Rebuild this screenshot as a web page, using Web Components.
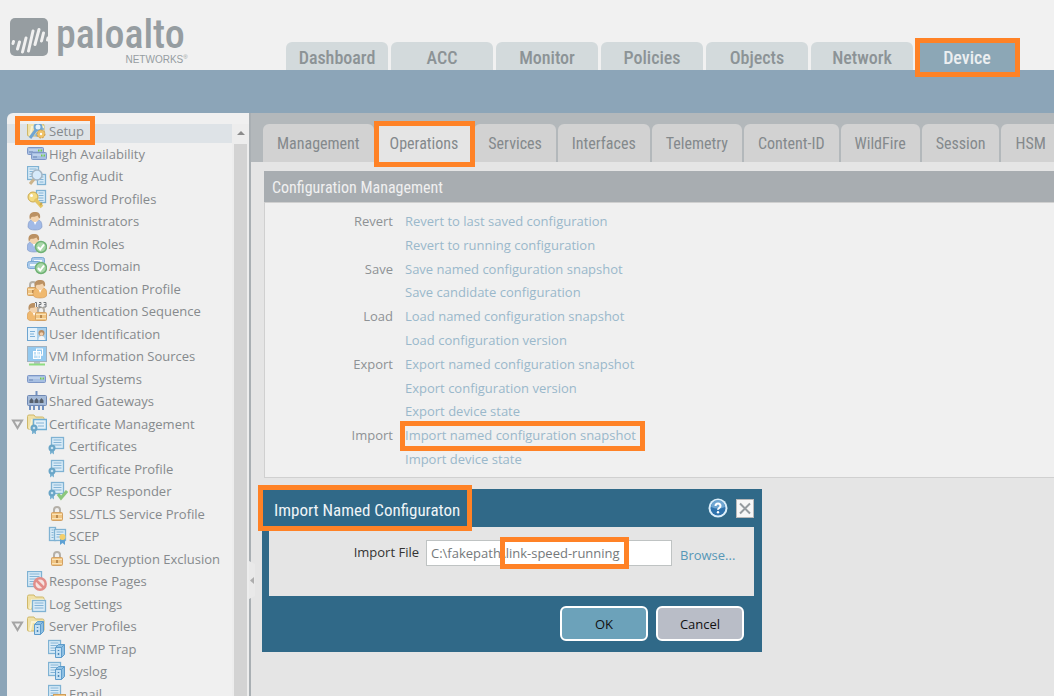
<!DOCTYPE html>
<html lang="en">
<head>
<meta charset="utf-8">
<title>Device - Setup - Operations</title>
<style>
  body { margin: 0; font: 13px/20px "Open Sans", "Noto Sans", sans-serif; color: #85898c; background: #8ca5b8; }
</style>
</head>
<body>
<pa-app></pa-app>
<script>
const ORANGE = '#ff8226';
const NARROW = '"Roboto Condensed", Roboto, sans-serif';

function define(name, html, setup) {
  const template = document.createElement('template');
  template.innerHTML = html;
  customElements.define(name, class extends HTMLElement {
    connectedCallback() {
      if (this.shadowRoot) return;
      this.attachShadow({ mode: 'open' }).append(template.content.cloneNode(true));
      if (setup) setup(this, this.shadowRoot);
    }
  });
}

/* ---------- icon parts ---------- */
const doc = (x, y, w, h) => {
  let s = `<rect x="${x + .5}" y="${y + .5}" width="${w - 1}" height="${h - 1}" fill="#d9ebf7" stroke="#7fb2d3" stroke-width="1.300"/>`;
  for (let i = y + 3; i < y + h - 2; i += 2.5) s += `<path d="M${x + 2.5} ${i}h${w - 5}" stroke="#84b4d6"/>`;
  return s;
};
const person = (x, y, shirt) => `<g transform="translate(${x} ${y})"><path d="M0 15q0-7 4-7h6q4 0 4 7-1 3-7 3T0 15z" fill="${shirt}" stroke="#7b93c4" stroke-width=".6"/><path d="M5.500 9l1.500 4 2-4z" fill="#fff"/><circle cx="7" cy="5.800" r="4.300" fill="#f3d3ad"/><path d="M2 8C0 1.500 4 0 7 0s6 1 5 6.500C10.500 6 10 4.500 9.500 3.500 7.500 5 5 4.500 3.500 5z" fill="#bb9163"/></g>`;
const lock = (x, y) => `<g transform="translate(${x} ${y})"><path d="M3 7V4q0-3 3-3t3 3v3" fill="none" stroke="#b5b0a8" stroke-width="2"/><rect x=".5" y="6.500" width="11" height="8" rx="1" fill="#f1c582" stroke="#d2a164"/><path d="M1 8.500h10M1 12.500h10" stroke="#f9e2b8"/><rect x="5" y="9" width="2" height="3" fill="#b98a50"/></g>`;
const check = (cx, cy) => `<circle cx="${cx}" cy="${cy}" r="5.500" fill="#a9d7a9" stroke="#6fb274" stroke-width="1.500"/><path d="M${cx - 3} ${cy}l2.200 2.500 3.800-5" fill="none" stroke="#fff" stroke-width="2"/>`;
const ribbon = (cx, cy) => `<path d="M${cx - 2} ${cy + 2}v4.500l2-1.500 2 1.500V${cy + 2}" fill="#7eb4d3"/><circle cx="${cx}" cy="${cy}" r="3.500" fill="#69a5c7"/><circle cx="${cx}" cy="${cy}" r="1.300" fill="#c6e0ee"/>`;
const folder = '<path d="M.5 14V2.500q0-1.500 1.500-1.500h5l1.500 2h7q1.500 0 1.500 1.500V14q0 1-1 1H1.500q-1 0-1-1z" fill="#f0e1a8" stroke="#cfb869"/><path d="M3 15L5 6h12" fill="none" stroke="#faf2d0" stroke-width="2"/>';
const box = (x, y, w) => `<rect x="${x + .5}" y="${y + .5}" width="${w - 1}" height="7" rx="1" fill="#a7bfe2" stroke="#7e97c6"/><path d="M${x + 2} ${y + 3}h${w - 4}" stroke="#d3e1f4"/><path d="M${x + 2} ${y + 5}h4" stroke="#6d86b3"/><path d="M${x + w - 6} ${y + 3.500}h1.500m1 0h1.500" stroke="#72c94e" stroke-width="2"/>`;
const plainBox = (x, y, w) => `<rect x="${x + .5}" y="${y + .5}" width="${w - 1}" height="7" rx="2" fill="#a9c9ea" stroke="#7aa8d4"/><path d="M${x + 3} ${y + 4}h${w - 6}" stroke="#f2f8fd" stroke-width="2"/>`;
const server = (x, y) => `<g transform="translate(${x} ${y})"><path d="M.5 3.500l3-3h6v10l-3 3h-6z" fill="#8dbfe2" stroke="#5e9ccb"/><path d="M.5 3.500h6v10M6.500 3.500l3-3" fill="none" stroke="#5e9ccb"/><rect x="1" y="4" width="5" height="9" fill="#c4e0f3"/><path d="M3.500 6v1m0 2v2" stroke="#4e88b6" stroke-width="1.500"/></g>`;
const cert = doc(3, 1, 13, 12) + ribbon(4, 12);

const ICONS = {
  setup: folder + '<path d="M9 15l7-8" stroke="#7fb2dc" stroke-width="3"/><circle cx="11" cy="6" r="3.500" fill="#e4f1fa" stroke="#6fa5d3" stroke-width="2"/><path d="M3 17l6-8" stroke="#6fa5d3" stroke-width="3"/><circle cx="14" cy="13" r="4" fill="#efc268" stroke="#cf9b4b" stroke-dasharray="2 1"/><circle cx="14" cy="13" r="1.200" fill="#fff"/>',
  ha: box(0, 3, 17) + box(4, 8, 16),
  audit: doc(0, 0, 12, 14) + doc(10, 8, 9, 11) + '<path d="M3 18l5-6" stroke="#cdb48a" stroke-width="3"/><circle cx="10" cy="9" r="5" fill="#d6eafa" stroke="#a5b6c4" stroke-width="1.500"/>',
  password: doc(9, 1, 10, 13) + '<circle cx="6" cy="8" r="5" fill="#f3dc85" stroke="#cba94e"/><path d="M8 10l7 8" stroke="#e5c562" stroke-width="3.500"/><path d="M15 14l-2 2" stroke="#cba94e" stroke-width="2"/><circle cx="4.500" cy="6.500" r="1.500" fill="#fff"/>',
  user: person(1, 1, '#a2bae6'),
  role: person(0, 0, '#a2bae6') + check(14, 13),
  domain: plainBox(4, 1, 14) + plainBox(0, 5, 14) + check(14, 12),
  auth: lock(0, 2) + person(6, 1, '#f0b96f').replace(/#7b93c4/, '#d2934f'),
  sequence: person(0, 2, '#f0b96f').replace(/#7b93c4/, '#d2934f') + lock(8, 5) + '<path d="M8 0h12v6H8z" fill="#f0f0f0"/><path d="M8 1.500h1.500V6M12 1.500h2v2h-2V6h2.500M16.500 1.500H19V6h-2.500m.5-2.300h2" fill="none" stroke="#73777a"/>',
  userid: '<rect x=".5" y="3.500" width="19" height="13" fill="#e4f1fa" stroke="#6da4d0"/><path d="M3 7.500h5m-5 2.500h4m-4 2.500h5" stroke="#7bb0da"/><rect x="10" y="4" width="9" height="12" fill="#a9cfeb"/><path d="M11.500 16q0-4 3-4t3.500 4z" fill="#f3f5f7"/><circle cx="14.500" cy="9" r="3" fill="#b58b63"/><circle cx="14.500" cy="10" r="1.800" fill="#f0cfae"/>',
  vm: '<rect x=".5" y=".5" width="19" height="15" fill="#94c9ef" stroke="#a3b2bf"/><rect x="6.500" y="5.500" width="7" height="7" fill="#bfe0f6" stroke="#fff"/><rect x="9.500" y="3" width="6" height="6" fill="none" stroke="#fff"/><path d="M7 9h9M11 5v8" stroke="#eef8ff"/><path d="M7 16h6v2H7z" fill="#b6bfc5"/><path d="M2 18.500h16" stroke="#8edc82" stroke-width="2"/>',
  vsys: box(0, 6, 19),
  gateway: '<path d="M9.500 0v6M3 14v5m4-5v5m5-5v5m4-5v5" stroke="#7191c0" stroke-width="2"/><rect x=".5" y="4.500" width="19" height="10" rx="1" fill="#a5bbd9" stroke="#7089b4"/><path d="M2.500 12V9.500L4.500 7l2 2.500V12zM7.500 12V9.500L9.500 7l2 2.500V12zM12.500 12V9.500l2-2.500 2 2.500V12z" fill="#56606d"/>',
  certs: folder + '<g transform="translate(4 5)"><rect x="2.500" y=".5" width="13" height="10" fill="#e3f0f8" stroke="#6faed4" stroke-width="1.500"/><path d="M5 4h8m-6 3h6" stroke="#84b4d6"/>' + ribbon(3, 9) + '</g>',
  cert: cert,
  ocsp: cert + '<path d="M10 13l3 4 6-7" fill="none" stroke="#8bc77d" stroke-width="3"/>',
  lock: lock(3, 2),
  scep: doc(1, 1, 7, 14) + doc(6, 3, 12, 12) + '<path d="M12 12h5v7l-2.500-2-2.500 2z" fill="#5fa2d4"/><circle cx="14.500" cy="11" r="3" fill="#f3cf6b"/>',
  block: doc(0, 0, 15, 16) + '<circle cx="13" cy="13" r="5.700" fill="#f6e2e0" stroke="#e28d89" stroke-width="2.500"/><path d="M9 9l8 8" stroke="#e28d89" stroke-width="2.500"/>',
  logs: folder + doc(5, 6, 14, 12),
  servers: folder + server(7, 5),
  trap: doc(0, 1, 13, 14) + server(7, 5),
  email: doc(0, 1, 13, 14) + '<rect x="5.500" y="10.500" width="12" height="8" fill="#f2c98a" stroke="#cf9f5a"/>'
};

/* ---------- shared pieces ---------- */
define('pa-icon', `<style>:host{display:block;width:20px;height:20px}svg{display:block}</style>
<svg width="20" height="20" viewBox="0 0 20 20" aria-hidden="true"></svg>`,
  (el, root) => { root.querySelector('svg').innerHTML = ICONS[el.getAttribute('name')] || ''; });

define('pa-mark', `<style>:host{position:absolute;box-sizing:border-box;border:5px solid ${ORANGE};pointer-events:none;z-index:3}</style>`);

/* ---------- header ---------- */
define('pa-logo', `<style>
:host{display:flex;gap:8px;color:#969da1}
svg{display:block;margin-top:1px}
.name{font:500 40px/40px ${NARROW};margin:-2px 0 0 -1px}
.sub{font:10px/10px "Liberation Sans",sans-serif;text-align:right;margin-right:-3px}
sup{font-size:6px;line-height:0}
</style>
<svg width="39" height="38" viewBox="0 0 39 38" aria-hidden="true"><rect width="38" height="38" rx="5" fill="#969da1"/><g stroke="#f1f1f1" stroke-width="3" stroke-linecap="round"><path d="M3.500 23.500l-.5 2M9.500 24l-2 7M16 20l-3.500 14M23 13l-4.500 20M29 11.500l-4 15M33.500 15l-2 8M38 20l-.5 2"/></g></svg>
<div><div class="name">paloalto</div><div class="sub">NETWORKS<sup>®</sup></div></div>`);

define('pa-main-tabs', `<style>
:host{display:flex;gap:3px;align-items:flex-end}
a{box-sizing:border-box;width:102px;height:28px;border-radius:6px 6px 0 0;background:#d3dadc;color:#8c9396;font:500 18px/32px ${NARROW};text-align:center;text-decoration:none;position:relative}
a[aria-current]{background:#8ca7b6;color:#eceff1}
pa-mark{inset:-4px -2px -7px -1px}
</style>
<a href="#dashboard">Dashboard</a><a href="#acc">ACC</a><a href="#monitor">Monitor</a><a href="#policies">Policies</a><a href="#objects">Objects</a><a href="#network">Network</a><a href="#device" aria-current="page">Device<pa-mark></pa-mark></a>`);

define('pa-header', `<style>
:host{display:flex;box-sizing:border-box;height:70px;background:#f1f1f1;padding-left:10px}
pa-logo{width:276px;padding-top:17px;box-sizing:border-box}
</style><pa-logo></pa-logo><pa-main-tabs></pa-main-tabs>`);

/* ---------- navigation tree ---------- */
define('pa-tree-item', `<style>
:host{display:flex;align-items:center;padding-left:20px;color:#868a8d}
:host([level="2"]){padding-left:41px}
:host([selected]){background:#dee3e7}
:host([open]){padding-left:4px}
.twist{display:none}
:host([open]) .twist{display:block;width:16px}
a{color:inherit;text-decoration:none;white-space:nowrap;margin-left:2px;line-height:20px}
:host([level="2"]) a{margin-left:1px}
</style>
<svg class="twist" width="16" height="12" viewBox="0 0 16 12" aria-hidden="true"><path d="M2 2.500h9L6.500 10z" fill="#f0f0f0" stroke="#a5a5a5" stroke-width="2"/></svg>
<pa-icon></pa-icon><a href="#item"><slot></slot></a>`,
  (el, root) => {
    const icon = document.createElement('pa-icon');
    icon.setAttribute('name', el.getAttribute('icon'));
    root.querySelector('pa-icon').replaceWith(icon);
  });

const TREE = [
  ['setup', 'Setup', 'selected'], ['ha', 'High Availability'], ['audit', 'Config Audit'], ['password', 'Password Profiles'],
  ['user', 'Administrators'], ['role', 'Admin Roles'], ['domain', 'Access Domain'], ['auth', 'Authentication Profile'],
  ['sequence', 'Authentication Sequence'], ['userid', 'User Identification'], ['vm', 'VM Information Sources'],
  ['vsys', 'Virtual Systems'], ['gateway', 'Shared Gateways'], ['certs', 'Certificate Management', 'open'],
  ['cert', 'Certificates', 'level="2"'], ['cert', 'Certificate Profile', 'level="2"'], ['ocsp', 'OCSP Responder', 'level="2"'],
  ['lock', 'SSL/TLS Service Profile', 'level="2"'], ['scep', 'SCEP', 'level="2"'], ['lock', 'SSL Decryption Exclusion', 'level="2"'],
  ['block', 'Response Pages'], ['logs', 'Log Settings'], ['servers', 'Server Profiles', 'open'],
  ['trap', 'SNMP Trap', 'level="2"'], ['trap', 'Syslog', 'level="2"'], ['email', 'Email', 'level="2"']
];

define('pa-sidebar', `<style>
:host{display:flex;position:relative;box-sizing:border-box;width:242px;padding-top:11px;background:#f0f0f0;border-radius:6px 0 0 0;min-height:0}
.view{flex:1;min-width:0;overflow:hidden}
nav{display:grid;min-height:585px;margin-top:-4px}
.scroll{width:17px;display:flex;flex-direction:column;background:#ededed}
.scroll svg{display:block;flex:none}
.thumb{flex:1;width:13px;margin-left:2px;background:#d3d3d3}
pa-mark{inset:3px auto auto 8px;width:80px;height:29px}
</style>
<div class="view"><nav aria-label="Device">${TREE.map(([i, t, a]) => `<pa-tree-item icon="${i}" ${a || ''}>${t}</pa-tree-item>`).join('')}</nav></div>
<div class="scroll"><svg width="17" height="20" viewBox="0 0 17 20" aria-hidden="true"><path d="M5 11l4-4 4 4z" fill="#8b8b8b"/></svg><div class="thumb"></div></div>
<pa-mark></pa-mark>`);

define('pa-splitter', `<style>
:host{display:block;position:relative;width:2px;background:#a9afb3;box-sizing:border-box;z-index:1}
svg{position:absolute;left:0;top:448px}
</style><svg width="7" height="38" viewBox="0 0 7 38" aria-hidden="true"><path d="M0 0l6 3v32l-6 3z" fill="#e9e9e9"/><path d="M5 16v7l-4-3.500z" fill="#adadad"/></svg>`);

/* ---------- content ---------- */
define('pa-sub-tabs', `<style>
:host{display:flex;gap:2px;height:49px;box-sizing:border-box;padding:11px 0 0 12px;background:#b3b8bb;overflow:hidden}
a{flex:none;box-sizing:border-box;padding:0 14px;border-radius:6px 6px 0 0;background:#d2d2d2;color:#84898c;font:16px/40px ${NARROW};text-decoration:none}
a[aria-current]{background:#e5e5e5}
</style>
<a href="#management">Management</a><a href="#operations" aria-current="page">Operations</a><a href="#services">Services</a><a href="#interfaces">Interfaces</a><a href="#telemetry">Telemetry</a><a href="#content-id">Content-ID</a><a href="#wildfire">WildFire</a><a href="#session">Session</a><a href="#hsm">HSM</a>`);

const ACTIONS = [
  ['Revert', 'Revert to last saved configuration'], ['', 'Revert to running configuration'],
  ['Save', 'Save named configuration snapshot'], ['', 'Save candidate configuration'],
  ['Load', 'Load named configuration snapshot'], ['', 'Load configuration version'],
  ['Export', 'Export named configuration snapshot'], ['', 'Export configuration version'], ['', 'Export device state'],
  ['Import', 'Import named configuration snapshot', true], ['', 'Import device state']
];

define('pa-config-panel', `<style>
:host{display:block;margin:9px 0 0 13px}
h2{margin:0;height:31px;padding-left:8px;background:#a8adb1;color:#f0f0f0;font:400 16px/34px ${NARROW}}
.rows{display:grid;grid-template-columns:128px 1fr;column-gap:12px;min-height:262px;padding:6px 0;border:1px solid #d0d0d0;border-right:0;background:#f0f0f0;align-items:center}
.rows span{text-align:right;color:#8e9295}
.rows div{justify-self:start;position:relative}
a{color:#9ab8cb;text-decoration:none}
pa-mark{inset:-4px -9px -6px -5px}
</style>
<h2>Configuration Management</h2>
<div class="rows">${ACTIONS.map(([g, t, m]) => `<span>${g}</span><div><a href="#action">${t}</a>${m ? '<pa-mark></pa-mark>' : ''}</div>`).join('')}</div>`);

define('pa-import-dialog', `<style>
:host{display:block;position:absolute;box-sizing:border-box;width:500px;background:#306988;padding:0 8px 11px 7px;color:#333}
header{display:flex;align-items:center;height:38px;padding-left:5px}
h2{margin:0;flex:1;color:#eef4f7;font:400 17px/24px ${NARROW};padding-top:4px}
header button{display:block;border:0;padding:0;background:none}
header svg{display:block}
.close{margin-left:8px}
form{margin:0}
.body{box-sizing:border-box;height:69px;padding:13px 18px 0 0;background:#e5e5e5;display:flex;position:relative}
label{width:150px;text-align:right;line-height:24px;margin-right:7px}
input{box-sizing:border-box;width:246px;height:26px;margin:0;padding:0 4px;border:1px solid #bfc3c3;border-radius:0;background:#fff;color:#75797b;font:13px/24px "Open Sans","Noto Sans",sans-serif}
.body a{color:#5797b7;text-decoration:none;margin-left:8px;line-height:30px}
footer{display:flex;justify-content:flex-end;gap:8px;padding:10px 10px 0 0}
footer button{box-sizing:border-box;width:88px;height:35px;border:2px solid #fff;border-radius:6px;padding:0;font:13px/20px "Open Sans","Noto Sans",sans-serif;color:#111;background:#b9bdc7}
footer .ok{background:#6ca2ba}
.title{inset:-4px auto auto -4px;width:214px;height:46px}
.file{inset:10px auto auto 231px;width:129px;height:32px}
</style>
<header><h2>Import Named Configuraton</h2>
<button type="button" aria-label="Help"><svg width="20" height="20" viewBox="0 0 20 20"><circle cx="10" cy="10" r="9.500" fill="#dbeefa"/><circle cx="10" cy="10" r="7.500" fill="#2f73ad"/><path d="M3 9a7 7 0 0 1 14 0q-7 3-14 0z" fill="#6fa6d2"/><path d="M7.500 8q0-2.500 2.500-2.500T12.500 8q0 1.200-1.200 1.800T10 11.800" fill="none" stroke="#fff" stroke-width="2"/><circle cx="10" cy="14.200" r="1.200" fill="#fff"/></svg></button>
<button class="close" type="button" aria-label="Close"><svg width="18" height="19" viewBox="0 0 18 19"><rect x=".5" y=".5" width="17" height="18" fill="#f7f7f7" stroke="#b9b9b9"/><path d="M4 4.500l10 10M14 4.500l-10 10" stroke="#969ca0" stroke-width="2"/></svg></button></header>
<form><div class="body"><label for="file">Import File</label><input id="file" type="text" value="C:\\fakepath\\link-speed-running"><a href="#browse">Browse...</a><pa-mark class="file"></pa-mark></div>
<footer><button class="ok" type="button">OK</button><button type="button">Cancel</button></footer></form>
<pa-mark class="title"></pa-mark>`);

define('pa-content', `<style>
:host{display:block;position:relative;flex:1;min-width:0;background:#e5e5e5}
pa-import-dialog{left:11px;top:376px}
.tab{inset:8px auto auto 123px;width:101px;height:46px}
</style>
<pa-sub-tabs></pa-sub-tabs><pa-config-panel></pa-config-panel><pa-mark class="tab"></pa-mark><pa-import-dialog></pa-import-dialog>`);

define('pa-app', `<style>
:host{display:flex;flex-direction:column;height:100vh;overflow:hidden}
main{flex:1;min-height:0;display:flex;padding:43px 0 0 7px}
</style>
<pa-header></pa-header><main><pa-sidebar></pa-sidebar><pa-splitter></pa-splitter><pa-content></pa-content></main>`);
</script>
</body>
</html>
